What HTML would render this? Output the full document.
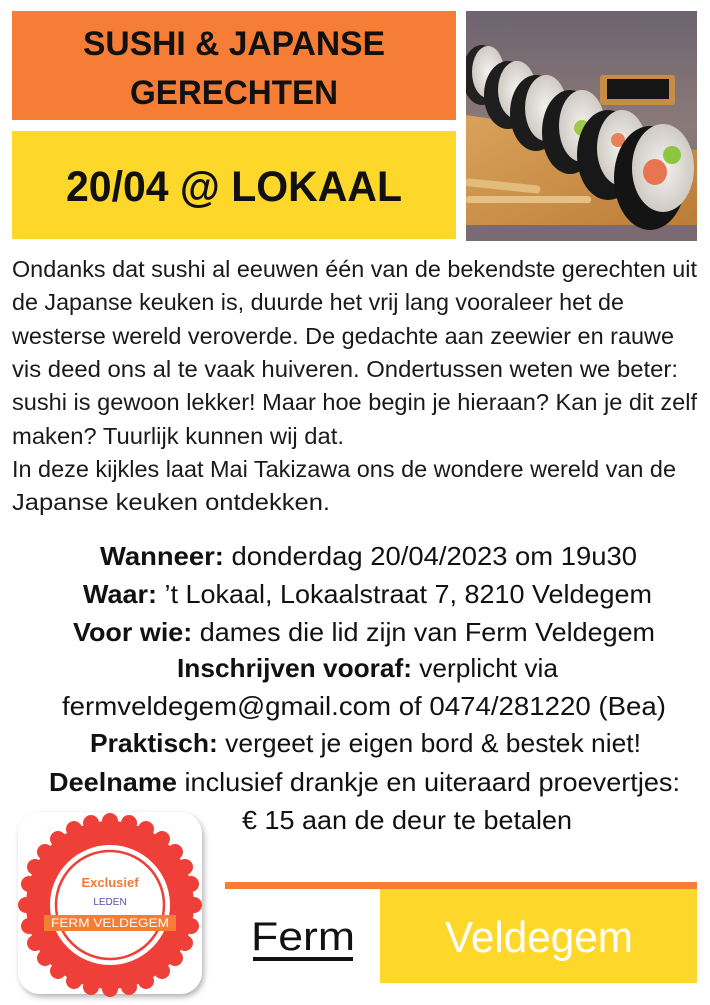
<!DOCTYPE html>
<html><head><meta charset="utf-8"><style>
html,body{margin:0;padding:0;background:#fff;width:710px;height:1005px;overflow:hidden}
svg{display:block}
</style></head><body>
<svg width="710" height="1005" viewBox="0 0 710 1005" xmlns="http://www.w3.org/2000/svg">
<defs>
<linearGradient id="bg" x1="0" y1="0" x2="0" y2="1"><stop offset="0" stop-color="#6e6470"/><stop offset="0.5" stop-color="#8a7a78"/><stop offset="1" stop-color="#6a6068"/></linearGradient>
<linearGradient id="wood" x1="0" y1="0" x2="1" y2="1"><stop offset="0" stop-color="#d9a25a"/><stop offset="1" stop-color="#b97a35"/></linearGradient>
<radialGradient id="rice"><stop offset="0" stop-color="#f4f2ee"/><stop offset="1" stop-color="#cfcac4"/></radialGradient>
<filter id="sh" x="-10%" y="-10%" width="130%" height="130%"><feDropShadow dx="2" dy="3" stdDeviation="3" flood-color="#000" flood-opacity="0.3"/></filter>
<clipPath id="ph"><rect x="466" y="11" width="231" height="230"/></clipPath>
</defs>
<rect x="12" y="11" width="444" height="109" fill="#f67d35"/>
<rect x="12" y="131" width="444" height="108" fill="#fdd82a"/>
<g font-family="'Liberation Sans',sans-serif" font-weight="bold" fill="#111" text-anchor="middle">
<text x="234" y="55" font-size="34" textLength="302" lengthAdjust="spacingAndGlyphs">SUSHI &amp; JAPANSE</text>
<text x="234" y="104" font-size="34" textLength="208" lengthAdjust="spacingAndGlyphs">GERECHTEN</text>
<text x="234" y="201" font-size="43" textLength="336" lengthAdjust="spacingAndGlyphs">20/04 @ LOKAAL</text>
</g>
<g clip-path="url(#ph)">
<rect x="466" y="11" width="231" height="230" fill="url(#bg)"/>
<rect x="600" y="75" width="75" height="30" rx="3" fill="#c78d45"/>
<rect x="607" y="79" width="62" height="20" fill="#151515"/>
<polygon points="466,115 697,150 697,241 466,241" fill="url(#wood)"/>
<rect x="466" y="225" width="231" height="16" fill="#7c6a72"/>
<rect x="466" y="178" width="75" height="8" rx="3" fill="#e3bb7a" transform="rotate(6 466 178)"/>
<rect x="466" y="196" width="125" height="7" rx="3" fill="#e6c184"/>
<g>
<ellipse cx="482" cy="75" rx="20" ry="30" fill="#222"/><ellipse cx="488" cy="72" rx="16" ry="26" fill="url(#rice)"/>
<ellipse cx="508" cy="95" rx="24" ry="34" fill="#1e1e1e"/><ellipse cx="517" cy="90" rx="19" ry="29" fill="url(#rice)"/>
<ellipse cx="536" cy="113" rx="26" ry="38" fill="#1c1c1c"/><ellipse cx="546" cy="108" rx="21" ry="33" fill="url(#rice)"/>
<ellipse cx="570" cy="132" rx="28" ry="42" fill="#1a1a1a"/><ellipse cx="582" cy="126" rx="23" ry="36" fill="url(#rice)"/>
<circle cx="582" cy="128" r="8" fill="#9cc94a"/>
<ellipse cx="608" cy="155" rx="31" ry="45" fill="#181818"/><ellipse cx="622" cy="148" rx="25" ry="38" fill="url(#rice)"/>
<circle cx="618" cy="140" r="7" fill="#e9805a"/>
<ellipse cx="650" cy="178" rx="36" ry="52" fill="#141414"/><ellipse cx="663" cy="168" rx="31" ry="44" fill="url(#rice)"/>
<ellipse cx="655" cy="172" rx="12" ry="13" fill="#e77650"/><circle cx="672" cy="155" r="9" fill="#8cc63f"/>
</g>
</g>
<g font-family="'Liberation Sans',sans-serif" font-size="23" fill="#1a1a1a">
<text x="12" y="277" textLength="685" lengthAdjust="spacingAndGlyphs">Ondanks dat sushi al eeuwen één van de bekendste gerechten uit</text>
<text x="12" y="310" textLength="612" lengthAdjust="spacingAndGlyphs">de Japanse keuken is, duurde het vrij lang vooraleer het de</text>
<text x="12" y="344" textLength="662" lengthAdjust="spacingAndGlyphs">westerse wereld veroverde.  De gedachte aan zeewier en rauwe</text>
<text x="12" y="377" textLength="666" lengthAdjust="spacingAndGlyphs">vis deed ons al te vaak huiveren.  Ondertussen weten we beter:</text>
<text x="12" y="410" textLength="685" lengthAdjust="spacingAndGlyphs">sushi is gewoon lekker!  Maar hoe begin je hieraan? Kan je dit zelf</text>
<text x="12" y="444" textLength="332" lengthAdjust="spacingAndGlyphs">maken? Tuurlijk kunnen wij dat.</text>
<text x="12" y="477" textLength="664" lengthAdjust="spacingAndGlyphs">In deze kijkles laat Mai Takizawa ons de wondere wereld van de</text>
<text x="12" y="510" textLength="318" lengthAdjust="spacingAndGlyphs">Japanse keuken ontdekken.</text>
</g>
<g font-family="'Liberation Sans',sans-serif" font-size="26" fill="#111">
<text x="100" y="565" textLength="537" lengthAdjust="spacingAndGlyphs"><tspan font-weight="bold">Wanneer:</tspan> donderdag 20/04/2023 om 19u30</text>
<text x="83" y="603" textLength="569" lengthAdjust="spacingAndGlyphs"><tspan font-weight="bold">Waar:</tspan> ’t Lokaal, Lokaalstraat 7, 8210 Veldegem</text>
<text x="73" y="641" textLength="582" lengthAdjust="spacingAndGlyphs"><tspan font-weight="bold">Voor wie:</tspan> dames die lid zijn van Ferm Veldegem</text>
<text x="177" y="677" textLength="381" lengthAdjust="spacingAndGlyphs"><tspan font-weight="bold">Inschrijven vooraf:</tspan> verplicht via</text>
<text x="62" y="715" textLength="604" lengthAdjust="spacingAndGlyphs">fermveldegem@gmail.com of 0474/281220 (Bea)</text>
<text x="90" y="752" textLength="551" lengthAdjust="spacingAndGlyphs"><tspan font-weight="bold">Praktisch:</tspan> vergeet je eigen bord &amp; bestek niet!</text>
<text x="49" y="791" textLength="631" lengthAdjust="spacingAndGlyphs"><tspan font-weight="bold">Deelname</tspan> inclusief drankje en uiteraard proevertjes:</text>
<text x="242" y="829" textLength="330" lengthAdjust="spacingAndGlyphs">€ 15 aan de deur te betalen</text>
</g>
<rect x="18" y="812" width="184" height="182" rx="22" fill="#fff" filter="url(#sh)"/>
<g transform="translate(110 905)">
<circle r="84" fill="#ee4038"/>
<g fill="#ee4038">
<circle cx="0" cy="-84" r="8"/><circle cx="19" cy="-82" r="8"/><circle cx="36" cy="-76" r="8"/><circle cx="52" cy="-66" r="8"/><circle cx="65" cy="-53" r="8"/><circle cx="75" cy="-38" r="8"/><circle cx="81" cy="-21" r="8"/>
<circle cx="84" cy="0" r="8"/><circle cx="81" cy="21" r="8"/><circle cx="75" cy="38" r="8"/><circle cx="65" cy="53" r="8"/><circle cx="52" cy="66" r="8"/><circle cx="36" cy="76" r="8"/><circle cx="19" cy="82" r="8"/>
<circle cx="0" cy="84" r="8"/><circle cx="-19" cy="82" r="8"/><circle cx="-36" cy="76" r="8"/><circle cx="-52" cy="66" r="8"/><circle cx="-65" cy="53" r="8"/><circle cx="-75" cy="38" r="8"/><circle cx="-81" cy="21" r="8"/>
<circle cx="-84" cy="0" r="8"/><circle cx="-81" cy="-21" r="8"/><circle cx="-75" cy="-38" r="8"/><circle cx="-65" cy="-53" r="8"/><circle cx="-52" cy="-66" r="8"/><circle cx="-36" cy="-76" r="8"/><circle cx="-19" cy="-82" r="8"/>
</g>
<circle r="60" fill="#fff"/>
<circle r="54" fill="none" stroke="#ee4038" stroke-width="2.5"/>
<rect x="-66" y="10" width="132" height="16" fill="#f67d35"/>
<text x="0" y="-18" text-anchor="middle" font-family="'Liberation Sans',sans-serif" font-weight="bold" font-size="13" fill="#f07a3a">Exclusief</text>
<text x="0" y="0" text-anchor="middle" font-family="'Liberation Sans',sans-serif" font-size="10" fill="#5a4fa8">LEDEN</text>
<text x="0" y="22" text-anchor="middle" font-family="'Liberation Sans',sans-serif" font-size="12" fill="#fff" textLength="118" lengthAdjust="spacingAndGlyphs">FERM VELDEGEM</text>
</g>
<rect x="225" y="882" width="472" height="7" fill="#f67d35"/>
<rect x="380" y="889" width="317" height="94" fill="#fdd82a"/>
<text x="251" y="950" font-family="'Liberation Sans',sans-serif" font-size="40" fill="#111" textLength="104" lengthAdjust="spacingAndGlyphs">Ferm</text>
<rect x="253" y="957" width="100" height="4" fill="#111"/>
<text x="445" y="952" font-family="'Liberation Sans',sans-serif" font-size="44" fill="#fff" textLength="188" lengthAdjust="spacingAndGlyphs">Veldegem</text>
</svg>
</body></html>
